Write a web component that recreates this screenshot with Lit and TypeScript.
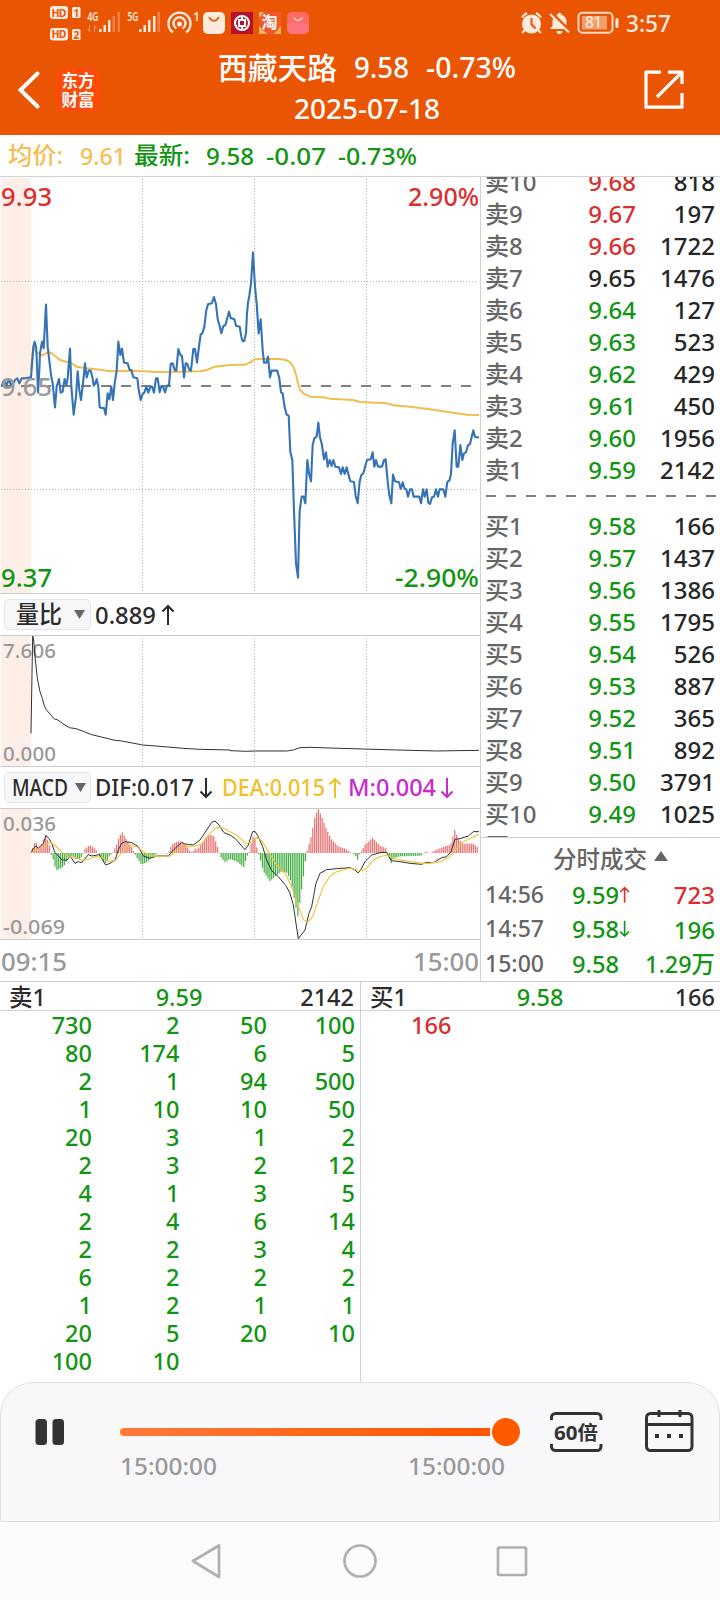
import { LitElement, html, svg, css } from "lit";
import { customElement } from "lit/decorators.js";

type Pt = [number, number];

/** Parses "x,y x,y ..." and shifts every point. */
const pts = (s: string, dx = 0, dy = 0): Pt[] =>
  s.trim().split(/\s+/).map((p) => {
    const [x, y] = p.split(",").map(Number);
    return [x + dx, y + dy] as Pt;
  });
const line = (p: Pt[]) => p.map(([x, y]) => `${x},${y}`).join(" ");

// Chart series are stored at three units per pixel.
const PRICE: Pt[] = [
  ...pts(`5,648 12,632 20,645 26,627 33,645 40,640 45,630 52,625 58,640 65,625 75,625 93,622 98,560 100,530 104,515 108,530 110,560 114,667 118,600 120,550 126,515 131,535 138,404 143,530 149,580 153,615 158,640 165,712 170,650 177,627 182,668 188,665 194,627 199,645 203,625 210,536 214,650 221,734 228,680 233,604 238,660 243,690 249,640 255,580 260,622 266,602 272,602 277,620 281,647 286,640 290,627 295,650 299,712 305,714 312,714 317,734 323,670 328,688 334,650 339,690 344,640 350,602 355,515 361,555 366,536 372,578 383,580 389,600 394,600 400,622 412,625 416,658 422,690 428,672 433,668 439,650 445,668 451,650 456,650 462,668 468,625 473,625 479,667 484,648 489,650 495,667 501,647 507,647 512,582 518,580 524,600 529,602 535,537 541,555 546,558 552,622 557,580 562,582 568,600 573,602 580,537 585,537 591,578 597,530 602,493 607,490 613,470 619,420 624,403 635,400 642,381 648,403 653,447 659,468 664,490 670,468 676,466 681,447 687,425 692,444 703,448 708,467 719,470 724,500 728,514 733,512 738,490 741,430 744,398`),
  ...pts(`58,378 63,340 69,248 75,350 80,400 86,490 92,448 98,540 102,578 109,578 114,560 120,622 125,602 142,602 148,625 153,667 158,670 164,712 170,734 176,737`, 690),
  ...pts(`181,155 187,180 192,333 198,490 204,533 209,333 215,290 221,290 226,310 232,180 237,220 243,244 248,135 253,115 260,110 265,68 270,112 276,135 282,178 288,157 293,200 299,180 305,198 310,180 316,200 327,202 333,222 338,202 344,222 350,202 355,222 361,244 372,246 377,288 383,310 389,245 394,225 400,220 411,180 422,178 428,157 433,200 438,180 444,200 456,200 462,180 467,178 473,245 478,285 484,310 489,224 495,244 507,247 512,267 518,247 523,265 529,268 534,290 540,268 546,268 551,290 568,290 573,310 579,268 584,290 590,268 595,308 600,312 606,292 612,290 618,268 624,290 629,268 640,268 646,290 652,246 658,242 663,222 668,130 674,91 680,200 685,200 691,135 697,180 702,160 708,157 714,136 720,132 730,91 735,111 747,112`, 690, 690),
];
const AVG: Pt[] = [
  ...pts(`93,600 97,550 102,530 108,545 125,556 145,547 155,550 180,570 215,580 230,590 260,595 300,599 330,604 380,602 430,604 470,606 540,605 600,604 620,600 645,590 690,585 730,584`),
  ...pts(`45,584 60,578 73,568 100,566 150,567 170,571 180,577 190,590 197,610 203,635 210,660 220,670 240,680 280,682 300,686 370,690 390,696 470,700 490,706 540,710 600,718 660,727 710,734 747,735`, 690),
];
const RATIO: Pt[] = [
  ...pts(`93,310 98,17 101,30 105,80 112,145 120,185 127,205 132,225 138,238 150,252 163,267 172,269 187,280 208,293 228,296 250,304 275,314 300,320 345,331 365,333 428,345 480,349 550,355 600,358 690,360`),
  ...pts(`0,362 50,364 73,363 170,363 190,360 210,353 240,352 330,355 500,360 620,363 747,361`, 690),
];
const DIF: Pt[] = [
  ...pts(`93,669 100,655 108,648 115,655 130,640 138,616 150,630 158,648 165,668 187,690 202,690 210,678 225,700 235,695 245,698 265,674 275,678 298,674 317,705 330,700 345,690 355,660 365,640 375,635 395,638 415,650 430,678 450,685 470,678 505,678 520,660 545,637 555,642 580,645 600,630 620,600 635,577 645,573 655,583 672,608 690,615`),
  ...pts(`15,625 45,659 55,645 68,605 75,604 85,620 98,650 110,690 125,722 145,740 168,767 180,790 190,825 198,880 205,926 225,900 237,850 245,830 258,760 270,730 290,719 320,716 360,713 375,720 384,729 392,720 405,695 425,675 450,668 470,667 484,692 510,695 540,700 575,703 590,697 610,698 635,683 650,680 663,665 675,628 690,626 715,618 730,605 747,605`, 690),
];
const DEA: Pt[] = [
  ...pts(`93,669 110,660 130,650 150,637 165,645 187,668 205,680 225,682 245,691 265,688 285,680 305,682 325,694 345,692 360,675 375,655 390,646 410,650 430,665 450,677 480,680 510,678 530,663 550,652 590,647 610,638 630,610 650,592 670,594`),
  ...pts(`0,605 20,615 48,640 65,637 80,622 95,632 120,672 140,705 165,730 185,770 205,830 220,868 232,878 248,860 265,810 280,770 300,738 320,725 340,720 360,715 395,723 410,715 430,690 450,680 470,675 500,688 540,695 590,701 630,695 660,680 675,660 700,635 747,612`, 690),
];
const HIST: Pt[] = [
  ...pts(`93,0 103,30 108,34 115,15 125,25 138,55 150,18 152,0 160,-20 168,-52 185,-45 195,-35 205,-12 215,-8 225,-18 240,-18 248,-8 252,10 270,24 285,14 292,5 298,-8 318,-32 328,-10 338,0 350,25 358,50 367,62 380,40 395,18 402,3 410,-12 425,-35 440,-28 455,-15 470,-2 480,1 505,-2 512,18 520,28 535,35 555,28 570,5 577,2 587,15 592,10 605,28 620,50 632,55 642,50 655,12 660,-8 675,-28 690,-18 710,-25 732,-43`),
  ...pts(`50,-12 58,3 65,35 71,55 78,30 83,3 88,-8 100,-55 120,-85 135,-70 155,-55 172,-60 185,-90 195,-150 204,-190 212,-130 220,-75 228,-10 232,8 245,55 255,110 265,132 275,110 290,70 305,40 325,20 350,11 363,1 375,-5 383,-20 390,0 395,5 405,25 428,45 450,22 467,15 472,-3 484,-30 492,-15 510,-10 575,-8 580,0 590,5 600,-2 615,8 640,18 662,25 668,45 674,70 685,42 700,28 730,28 747,13`, 690),
];
const histAt = (x: number) => {
  for (let i = 1; i < HIST.length; i++) {
    const [x0, h0] = HIST[i - 1];
    const [x1, h1] = HIST[i];
    if (x <= x1) return h0 + ((h1 - h0) * (x - x0)) / (x1 - x0);
  }
  return 0;
};
const BARS: Pt[] = Array.from({ length: 240 }, (_, i) => {
  const x = 98 + i * 5.604;
  return [x, histAt(x)] as Pt;
});

type Row = [string, string, string, string];
const SELL: Row[] = [
  ["卖10", "9.68", "818", "r"], ["卖9", "9.67", "197", "r"], ["卖8", "9.66", "1722", "r"],
  ["卖7", "9.65", "1476", "k"], ["卖6", "9.64", "127", "g"], ["卖5", "9.63", "523", "g"],
  ["卖4", "9.62", "429", "g"], ["卖3", "9.61", "450", "g"], ["卖2", "9.60", "1956", "g"],
  ["卖1", "9.59", "2142", "g"],
];
const BUY: Row[] = [
  ["买1", "9.58", "166", "g"], ["买2", "9.57", "1437", "g"], ["买3", "9.56", "1386", "g"],
  ["买4", "9.55", "1795", "g"], ["买5", "9.54", "526", "g"], ["买6", "9.53", "887", "g"],
  ["买7", "9.52", "365", "g"], ["买8", "9.51", "892", "g"], ["买9", "9.50", "3791", "g"],
  ["买10", "9.49", "1025", "g"], ["买11", "9.48", "1188", "g"],
];
const QUEUE = `730 2 50 100 80 174 6 5 2 1 94 500 1 10 10 50 20 3 1 2 2 3 2 12 4 1 3 5 2 4 6 14 2 2 3 4 6 2 2 2 1 2 1 1 20 5 20 10 100 10`.split(" ");

/** Text run set to an exact width. */
const run = (t: string, w: number, size: number, cls = "", h = 32) => html`
  <svg class="run ${cls}" width=${w} height=${h} viewBox="0 0 ${w} ${h}">
    <text x="0" y=${h / 2 + size * 0.36} font-size=${size} textLength=${w} lengthAdjust="spacingAndGlyphs">${t}</text>
  </svg>`;
const arrow = (dir: "up" | "down", cls = "", s = 1) => html`
  <svg class="arrow ${cls}" width=${14 * s} height=${22 * s} viewBox="0 0 14 22">
    <path d=${dir === "up" ? "M7 21V2M1.5 7.5 7 2l5.500 5.500" : "M7 1v19M1.500 14.500 7 20l5.500-5.500"} />
  </svg>`;

const vgrid = (h: number) =>
  [142.5, 254.5, 366.5].map((x) => svg`<line class="dot" x1=${x} x2=${x} y1="2" y2=${h}></line>`);

@customElement("app-root")
export class AppRoot extends LitElement {
  static styles = css`
    :host {
      display: block; width: 720px; height: 1600px; overflow: hidden; background: #fff;
      font-family: "Noto Sans", "Noto Sans CJK SC", sans-serif; color: #2b2b2b; font-size: 24px; font-weight: 500;
    }
    * { box-sizing: border-box; }
    svg { display: block; flex: none; }
    svg text { font-family: "Noto Sans", "Noto Sans CJK SC", sans-serif; }
    .run { overflow: visible; fill: currentColor; }
    .arrow { fill: none; stroke: currentColor; stroke-width: 2; }
    .r { color: #d92f2f; }
    .g { color: #129512; }
    .k { color: #262626; }
    .y { color: #f0c02a; }
    .m { color: #cc29cc; }
    .top { height: 135px; background: #ea5504; color: #fff; }
    .status { display: flex; justify-content: space-between; height: 46px; color: #ffeade; }
    .bar { display: flex; height: 89px; }
    .back { margin: 24px 0 0 16px; }
    .logo {
      width: 44px; height: 44px; margin: 22px 0 0 15px; border-radius: 10px; background: #ff4b0a;
      display: flex; flex-direction: column; align-items: center; justify-content: center;
      font: 700 16.5px/19px "Noto Sans CJK SC", sans-serif;
    }
    .titles { width: 300px; margin-left: 118px; padding-top: 1px; }
    .title { display: flex; height: 42px; align-items: center; }
    .t2 { margin-left: 17px; }
    .t3 { margin-left: 17px; }
    .date { display: flex; height: 39px; align-items: center; padding-left: 76px; }
    .share { margin: 22px 0 0 123px; }
    .info { display: flex; height: 41px; align-items: center; padding-left: 8px; color: #f5be53; }
    .gap1 { width: 17px; }
    .gap2 { width: 16px; }
    .new { margin-left: 8px; }
    .d1 { margin-left: 12px; }
    .d2 { margin-left: 12px; }
    .main { display: flex; height: 805px; border-top: 1px solid #d0d2d4; }
    .charts { width: 480px; }
    .chart { border-bottom: 1px solid #ccc; overflow: hidden; }
    .ind { display: flex; align-items: center; height: 42px; border-bottom: 1px solid #ccc; padding-left: 4px; }
    .pick {
      display: flex; align-items: center; width: 87px; height: 31px; border: 1px solid #e0e3e8; margin-right: 4px;
      border-radius: 5px; background: #f6f7f9; padding-left: 7px;
    }
    .pick .run { margin-right: 7px; }
    .pick.wide { padding-left: 11px; }
    .pick.wide .run { margin-right: 12px; }
    .ind .arrow { margin: 0 9px 0 5px; }
    .ind .y.arrow { margin: 0 6px 0 3px; }
    .ind .m.arrow { margin: 0 0 0 4px; }
    .dot { stroke: #b5b5b5; stroke-width: 1; stroke-dasharray: 1 2; }
    .zone { fill: #fdeee8; }
    .dash { stroke: #808080; stroke-width: 2; stroke-dasharray: 10 10; }
    .ln { fill: none; stroke-linejoin: round; vector-effect: non-scaling-stroke; }
    .blue { stroke: #3573b6; stroke-width: 2.1; }
    .avg { stroke: #f0be4f; stroke-width: 2; }
    .blk { stroke: #333; stroke-width: 1; }
    .gold { stroke: #eec43a; stroke-width: 1.1; }
    .up { fill: #e87373; }
    .down { fill: #46b046; }
    .axis { display: flex; justify-content: space-between; align-items: center; height: 41px; padding: 2px 1px 0; color: #999; }
    .side { width: 240px; border-left: 1px solid #d0d2d4; display: flex; flex-direction: column; }
    .book { height: 662px; padding: 0 5px 0 4px; overflow: hidden; border-bottom: 1px solid #ccc; }
    .sells { margin-top: -11px; }
    .row { display: grid; grid-template-columns: 75px 76px 1fr; height: 32px; line-height: 32px; color: #262626; font-size: 24px; }
    .row span { text-align: right; }
    .row span:first-child { text-align: left; color: #666; }
    .sep { display: block; margin: 9px 0 13px 1px; }
    .deals { flex: 1; padding: 1px 5px 0 4px; }
    .dhead { display: flex; align-items: center; justify-content: center; gap: 7px; height: 39px; color: #666; font-size: 23.5px; padding-left: 21px; }
    .dhead svg { margin-top: -5px; }
    .deal { display: flex; align-items: center; height: 34.5px; }
    .deal .px { margin-left: 28px; }
    .deal .vol { margin-left: auto; }
    .tm { color: #666; }
    .lvls { display: flex; height: 30px; border-top: 1px solid #ccc; border-bottom: 1px solid #d0d2d4; }
    .lvl { flex: 1; display: grid; grid-template-columns: 1fr 1fr 1fr; padding: 0 6px 0 9px; line-height: 30px; font-size: 23.5px; }
    .lvl span:nth-child(2) { text-align: center; padding-right: 5px; }
    .lvl span:nth-child(3) { text-align: right; }
    .lvl + .lvl { padding-right: 5px; }
    .queues { display: flex; height: 371px; }
    .q { width: 361px; border-right: 1px solid #d0d2d4; }
    .lvl:first-child { border-right: 1px solid #d0d2d4; flex: 0 0 361px; }
    .qgrid { display: grid; grid-template-columns: 92px 87.5px 87.5px 88px; line-height: 28px; text-align: right; font-size: 23.5px; }
    .q2 { line-height: 28px; padding-left: 50px; font-size: 23.5px; }
    .player {
      height: 140px; border: 1px solid #e0e1e3; border-radius: 33px 33px 0 0; background: #f8f8fb;
      display: flex; padding: 26px 0 0 33px; color: #333;
    }
    .stage { background: #fff; }
    .track { margin-left: 55px; width: 400px; }
    .times { display: flex; justify-content: space-between; width: 386px; padding-left: 1px; color: #999; margin-top: -4px; }
    .speed { margin-left: 30px; }
    .cal { margin-left: 41px; }
    .nav { height: 79px; background: #fcfcfc; display: flex; padding: 19px 0 0 190px; }
    .nav svg { fill: none; stroke: #b0b0b0; stroke-width: 2.7; stroke-linejoin: round; }
    .n2 { margin-left: 120px; }
    .n3 { margin-left: 116px; }
  `;

  private statusBar() {
    return html`<div class="status">
      <svg width="320" height="46" viewBox="0 0 320 46" fill="#ffeade">
        <rect x="50" y="6" width="18" height="13" rx="3"></rect><rect x="72" y="7" width="8.500" height="11" rx="1.500"></rect>
        <rect x="50" y="28" width="18" height="12.500" rx="3"></rect><rect x="72" y="29" width="8.500" height="11" rx="1.500"></rect>
        <g fill="#ea5504" font-size="10.500" font-weight="700">
          <text x="51.500" y="16.500" textLength="15">HD</text><text x="73.500" y="16.500" font-size="10">1</text>
          <text x="51.500" y="38.200" textLength="15">HD</text><text x="73.500" y="38.500" font-size="10">2</text>
        </g>
        <g font-size="12.500" font-weight="600">
          <text x="87.500" y="21" textLength="11" lengthAdjust="spacingAndGlyphs">4G</text>
          <text x="127.500" y="21" textLength="11" lengthAdjust="spacingAndGlyphs">5G</text>
        </g>
        <path opacity=".45" d="M90 25v7l-3-3h2v-4zM94 32v-7l3 3h-2v4z"></path>
        <rect x="99" y="29" width="2.500" height="3"></rect><rect x="103.500" y="25" width="2.500" height="7"></rect><rect x="108" y="20" width="2.500" height="12"></rect>
        <g opacity=".3"><rect x="112.500" y="16" width="2.500" height="16"></rect><rect x="117.500" y="12" width="2.500" height="20"></rect></g>
        <rect x="139" y="29" width="2.500" height="3"></rect><rect x="143.500" y="25" width="2.500" height="7"></rect><rect x="148" y="20" width="2.500" height="12"></rect><rect x="153" y="16" width="2.500" height="16"></rect>
        <rect opacity=".3" x="157.500" y="12" width="2.500" height="20"></rect>
        <g fill="none" stroke="#ffeade" stroke-width="2.400">
          <path d="M173 32.500a11 11 0 1 1 13 0"></path><path d="M176.500 28.500a6 6 0 1 1 6 0"></path>
        </g>
        <circle cx="179.500" cy="24" r="2.500"></circle>
        <text x="193" y="21" font-size="12" font-weight="600">1</text>
        <rect x="203" y="12" width="22" height="22" rx="5"></rect>
        <path d="M209 17q5 8 10 0" fill="none" stroke="#ea5504" stroke-width="1.500"></path>
        <rect x="231" y="12" width="22" height="22" fill="#b3122a"></rect>
        <g fill="none" stroke="#fff" stroke-width="2"><circle cx="242" cy="23" r="7"></circle><path d="M242 15v4M242 27v4"></path><rect x="239" y="20" width="6" height="6"></rect></g>
        <rect x="259" y="12" width="22" height="22" fill="#f0572a"></rect>
        <path d="M259 26l8 8h-8zM274 34l7-8v8zM259 12h5l-5 6z" fill="#f8b45b"></path>
        <text x="261.500" y="28" font-size="16" font-weight="700" fill="#fff">淘</text>
        <rect x="287" y="12" width="22" height="22" rx="5" fill="#ff6b63"></rect><path d="M287 23h22v6a5 5 0 0 1-5 5h-12a5 5 0 0 1-5-5z" fill="#ff7480"></path>
        <path d="M293.500 17.500q4.500 6 9 0" fill="none" stroke="#ffd9d4" stroke-width="1.400"></path>
      </svg>
      <svg width="210" height="46" viewBox="510 0 210 46" fill="#ffeade">
        <circle cx="531.500" cy="24" r="9.500"></circle>
        <g fill="none" stroke="#ffeade" stroke-width="2.200"><path d="M522 17.500a14 14 0 0 1 5-4.500M541 17.500a14 14 0 0 0-5-4.500M525 30l-3 3M538 30l3 3"></path></g>
        <path d="M531.500 18v6.500l4 4" fill="none" stroke="#ea5504" stroke-width="2"></path>
        <path d="M550 29l2.500-3v-5a7 7 0 0 1 5-6.200a2 2 0 0 1 4 0a7 7 0 0 1 5 6.200v5l2.500 3zM556.500 31h6a3 3 0 0 1-6 0z"></path>
        <path d="M551.500 12.500l19 19" stroke="#ea5504" stroke-width="2.500"></path><path d="M550 14l19 18.500" stroke="#ffeade" stroke-width="2"></path>
        <rect x="578.500" y="12.800" width="34" height="20" rx="4" fill="none" stroke="#ffd9c4" stroke-width="2"></rect>
        <rect x="582" y="16" width="25" height="13.500" fill="#f59c6b"></rect><rect x="615.500" y="18" width="3" height="10" rx="1.500"></rect>
        <text x="585" y="28" font-size="15.500" textLength="17" font-weight="500">81</text>
        <text x="626" y="32" font-size="24" textLength="45" lengthAdjust="spacingAndGlyphs">3:57</text>
      </svg>
    </div>`;
  }

  private priceChart() {
    return html`<div class="chart">
      <svg width="480" height="416" viewBox="0 0 480 416">
        <rect class="zone" x="1" y="1" width="30" height="415"></rect>
        ${vgrid(416)}
        <line class="dot" x1="1" x2="478" y1="104.500" y2="104.500"></line>
        <line class="dot" x1="1" x2="478" y1="312.500" y2="312.500"></line>
        <line class="dash" x1="1" x2="479" y1="209" y2="209"></line>
        <g transform="translate(0 -7) scale(.33333)">
          <polyline class="ln avg" points=${line(AVG)}></polyline>
          <polyline class="ln blue" points=${line(PRICE)}></polyline>
        </g>
        <g font-size="25.500">
          <text x="1" y="28.500" fill="#d92f2f" textLength="51">9.93</text>
          <text x="408" y="28.500" fill="#d92f2f" textLength="71" lengthAdjust="spacingAndGlyphs">2.90%</text>
          <text x="1" y="218.500" fill="#999" textLength="51">9.65</text>
          <text x="1" y="409.500" fill="#129512" textLength="51">9.37</text>
          <text x="395" y="409.500" fill="#129512" textLength="84" lengthAdjust="spacingAndGlyphs">-2.90%</text>
        </g>
      </svg>
    </div>`;
  }

  private ratioChart() {
    return html`<div class="chart">
      <svg width="480" height="130" viewBox="0 0 480 130">
        <rect class="zone" x="1" y="0" width="30" height="130"></rect>
        ${vgrid(130)}
        <g font-size="20.500" fill="#999"><text x="3" y="22" textLength="53">7.606</text><text x="3" y="124.500" textLength="53">0.000</text></g>
        <g transform="translate(0 -6) scale(.33333)"><polyline class="ln blk" points=${line(RATIO)}></polyline></g>
      </svg>
    </div>`;
  }

  private macdChart() {
    return html`<div class="chart">
      <svg width="480" height="130" viewBox="0 0 480 130">
        <rect class="zone" x="1" y="0" width="30" height="130"></rect>
        ${vgrid(130)}
        <g font-size="20.500" fill="#999"><text x="3" y="21.500" textLength="53">0.036</text><text x="3" y="124.500" textLength="62" lengthAdjust="spacingAndGlyphs">-0.069</text></g>
        <g transform="translate(0 -179) scale(.33333)">
          ${BARS.map(([x, h]) => svg`<rect class=${h > 0 ? "up" : "down"} x=${x - 2} y=${h > 0 ? 669 - h : 669} width="3.700" height=${Math.abs(h)}></rect>`)}
          <polyline class="ln blk" points=${line(DIF)}></polyline>
          <polyline class="ln gold" points=${line(DEA)}></polyline>
        </g>
      </svg>
    </div>`;
  }

  private rows(list: Row[]) {
    return list.map(([n, p, v, c]) => html`<div class="row"><span>${n}</span><span class=${c}>${p}</span><span>${v}</span></div>`);
  }

  render() {
    const caret = html`<svg width="11" height="9" viewBox="0 0 11 9"><path d="M0 0h11L5.500 9z" fill="#666"></path></svg>`;
    return html`
      <div class="top">
        ${this.statusBar()}
        <div class="bar">
          <svg class="back" width="25" height="40" viewBox="0 0 25 40"><path d="M21.500 3.500 4.500 20l17 16.500" fill="none" stroke="#fff" stroke-width="4" stroke-linecap="round"></path></svg>
          <div class="logo"><span>东方</span><span>财富</span></div>
          <div class="titles">
            <div class="title">${run("西藏天路", 119, 29.5)}<span class="t2">${run("9.58", 55, 29)}</span><span class="t3">${run("-0.73%", 90, 29)}</span></div>
            <div class="date">${run("2025-07-18", 146, 26.5)}</div>
          </div>
          <svg class="share" width="46" height="46" viewBox="641 68 46 46" fill="none" stroke="#fff" stroke-width="3.200" stroke-linejoin="round">
            <path d="M661 72.200h-15v35h36V93M668 72.200h14V84M682 72.200 657 97"></path>
          </svg>
        </div>
      </div>
      <div class="info">
        ${run("均价:", 55, 23.5)}<span class="gap1"></span>${run("9.61", 46, 24)}
        <span class="g new">${run("最新:", 56, 23.5)}</span><span class="gap2"></span>
        <span class="g">${run("9.58", 48, 24)}</span>
        <span class="g d1">${run("-0.07", 60, 24)}</span>
        <span class="g d2">${run("-0.73%", 79, 24)}</span>
      </div>
      <div class="main">
        <div class="charts">
          ${this.priceChart()}
          <div class="ind"><div class="pick wide">${run("量比", 46, 23.5)}${caret}</div>${run("0.889", 61, 24)}${arrow("up")}</div>
          ${this.ratioChart()}
          <div class="ind">
            <div class="pick">${run("MACD", 56, 23)}${caret}</div>
            ${run("DIF:0.017", 99, 23.5)}${arrow("down")}
            ${run("DEA:0.015", 103, 23.5, "y")}${arrow("up", "y")}
            ${run("M:0.004", 88, 23.5, "m")}${arrow("down", "m")}
          </div>
          ${this.macdChart()}
          <div class="axis">${run("09:15", 66, 25.5)}${run("15:00", 66, 25.5)}</div>
        </div>
        <div class="side">
          <div class="book">
            <div class="sells">${this.rows(SELL)}</div>
            <svg class="sep" width="230" height="2" viewBox="0 0 230 2"><line class="dash" x1="0" x2="230" y1="1" y2="1"></line></svg>
            <div>${this.rows(BUY)}</div>
          </div>
          <div class="deals">
            <div class="dhead"><span>分时成交</span><svg width="14" height="10" viewBox="0 0 14 10"><path d="M0 10h14L7 0z" fill="#666"></path></svg></div>
            <div class="deal"><span class="tm">${run("14:56", 59, 23.5)}</span><span class="px g">${run("9.59", 47, 24)}</span><span class="r">${arrow("up", "", 0.8)}</span><span class="vol r">723</span></div>
            <div class="deal"><span class="tm">${run("14:57", 59, 23.5)}</span><span class="px g">${run("9.58", 47, 24)}</span><span class="g">${arrow("down", "", 0.8)}</span><span class="vol g">196</span></div>
            <div class="deal"><span class="tm">${run("15:00", 59, 23.5)}</span><span class="px g">${run("9.58", 47, 24)}</span><span class="vol g">${run("1.29万", 70, 24)}</span></div>
          </div>
        </div>
      </div>
      <div class="lvls">
        <div class="lvl"><span>卖1</span><span class="g">9.59</span><span>2142</span></div>
        <div class="lvl"><span>买1</span><span class="g">9.58</span><span>166</span></div>
      </div>
      <div class="queues">
        <div class="q"><div class="qgrid g">${QUEUE.map((n) => html`<span>${n}</span>`)}</div></div>
        <div class="q2 r">166</div>
      </div>
      <div class="stage"><div class="player">
        <svg width="30" height="46" viewBox="34 1409 30 46" fill="#333"><rect x="35.500" y="1419" width="11.500" height="26" rx="3.500"></rect><rect x="52.500" y="1419" width="11.500" height="26" rx="3.500"></rect></svg>
        <div class="track">
          <svg width="402" height="46" viewBox="119 1409 402 46">
            <defs><linearGradient id="tr"><stop offset="0" stop-color="#ff7a38"></stop><stop offset="1" stop-color="#ff5500"></stop></linearGradient></defs>
            <path d="M124 1428h366v8H124a4 4 0 0 1 0-8z" fill="url(#tr)"></path>
            <circle cx="506" cy="1432" r="15.500" fill="#fff"></circle><circle cx="506" cy="1432" r="14" fill="#ff5a00"></circle>
          </svg>
          <div class="times">${run("15:00:00", 97, 23.5)}${run("15:00:00", 97, 23.5)}</div>
        </div>
        <svg class="speed" width="54" height="46" viewBox="549 1409 54 46">
          <path d="M551.500 1420v-2.500a4 4 0 0 1 4-4h41.500a4 4 0 0 1 4 4v2.500M551.500 1444v2.500a4 4 0 0 0 4 4h41.500a4 4 0 0 0 4-4v-2.500" fill="none" stroke="#333" stroke-width="3"></path>
          <text x="554" y="1440" font-size="19.500" font-weight="700" fill="#333" textLength="44" lengthAdjust="spacingAndGlyphs">60倍</text>
        </svg>
        <svg class="cal" width="50" height="46" viewBox="645 1409 50 46">
          <g fill="none" stroke="#333" stroke-width="3"><rect x="647.500" y="1413.500" width="45.500" height="37" rx="4"></rect><path d="M647 1424.500h46M660 1410v7M681 1410v7"></path></g>
          <path d="M656 1434h4v4h-4zM668 1434h4v4h-4zM680 1434h4v4h-4z" fill="#333"></path>
        </svg>
      </div></div>
      <div class="nav">
        <svg width="32" height="40" viewBox="190 1541 32 40"><path d="M219 1545.500v31.500L193 1561z"></path></svg>
        <svg class="n2" width="36" height="40" viewBox="342 1541 36 40"><circle cx="360" cy="1561" r="15.500"></circle></svg>
        <svg class="n3" width="36" height="40" viewBox="494 1541 36 40"><rect x="498" y="1547.500" width="28" height="27.500" rx="1"></rect></svg>
      </div>
    `;
  }
}
